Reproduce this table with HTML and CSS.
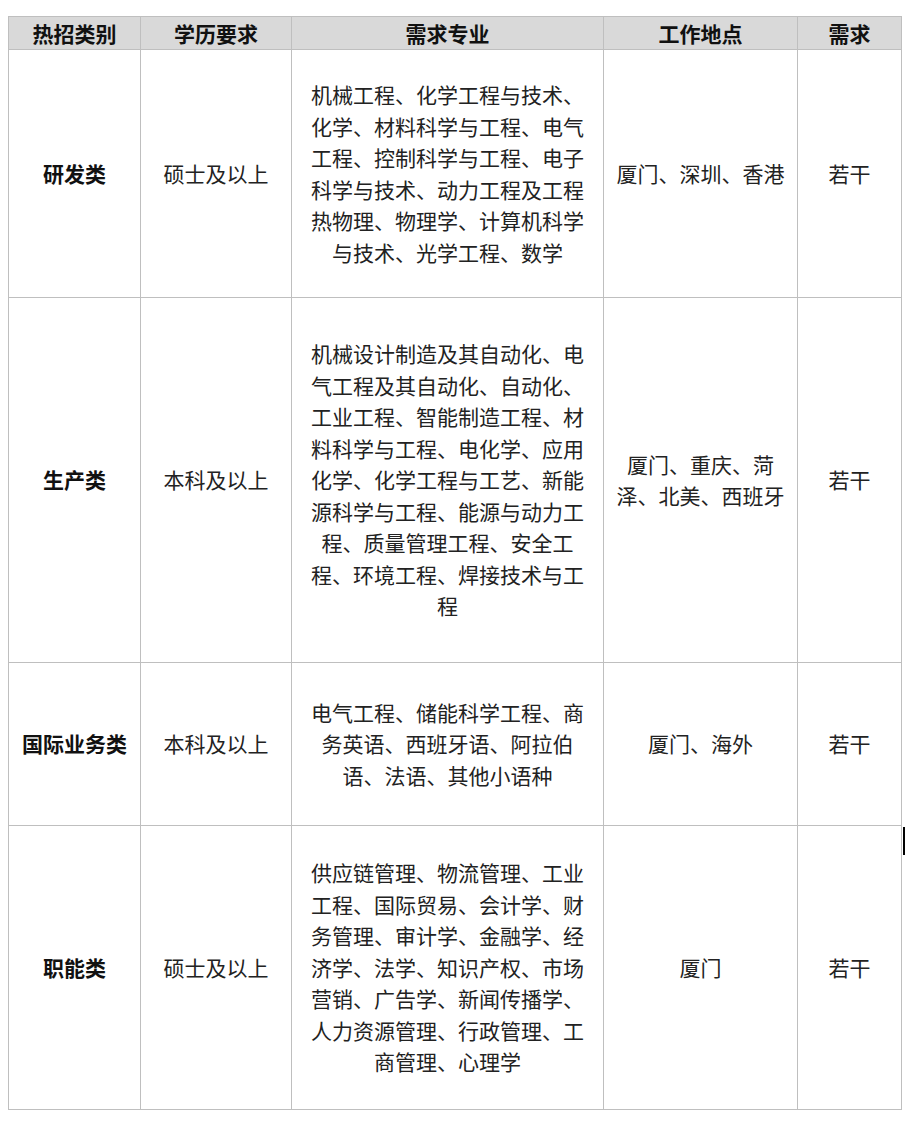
FILE: index.html
```html
<!DOCTYPE html>
<html lang="zh-CN">
<head>
<meta charset="utf-8">
<title>热招岗位</title>
<link rel="stylesheet" href="styles.css">
</head>
<body>
<div class="wrap">
<table class="jobs">
  <colgroup>
    <col class="c1"><col class="c2"><col class="c3"><col class="c4"><col class="c5">
  </colgroup>
  <thead>
    <tr class="head">
      <th>热招类别</th><th>学历要求</th><th>需求专业</th><th>工作地点</th><th>需求</th>
    </tr>
  </thead>
  <tbody>
    <tr class="r1">
      <td class="cat">研发类</td>
      <td>硕士及以上</td>
      <td>机械工程、化学工程与技术、化学、材料科学与工程、电气工程、控制科学与工程、电子科学与技术、动力工程及工程热物理、物理学、计算机科学与技术、光学工程、数学</td>
      <td>厦门、深圳、香港</td>
      <td>若干</td>
    </tr>
    <tr class="r2">
      <td class="cat">生产类</td>
      <td>本科及以上</td>
      <td>机械设计制造及其自动化、电气工程及其自动化、自动化、工业工程、智能制造工程、材料科学与工程、电化学、应用化学、化学工程与工艺、新能源科学与工程、能源与动力工程、质量管理工程、安全工程、环境工程、焊接技术与工程</td>
      <td>厦门、重庆、菏泽、北美、西班牙</td>
      <td>若干</td>
    </tr>
    <tr class="r3">
      <td class="cat">国际业务类</td>
      <td>本科及以上</td>
      <td>电气工程、储能科学工程、商务英语、西班牙语、阿拉伯语、法语、其他小语种</td>
      <td>厦门、海外</td>
      <td>若干</td>
    </tr>
    <tr class="r4">
      <td class="cat">职能类</td>
      <td>硕士及以上</td>
      <td>供应链管理、物流管理、工业工程、国际贸易、会计学、财务管理、审计学、金融学、经济学、法学、知识产权、市场营销、广告学、新闻传播学、人力资源管理、行政管理、工商管理、心理学</td>
      <td>厦门</td>
      <td>若干</td>
    </tr>
  </tbody>
</table>
<span class="caret"></span>
</div>
</body>
</html>
```
FILE: styles.css
```css
html, body {
  margin: 0;
  padding: 0;
  background: #ffffff;
}
body {
  font-family: "Noto Sans CJK SC", "Noto Sans", sans-serif;
  color: #222222;
}
.wrap {
  position: relative;
  padding: 16px 0 0 8px;
}
.jobs {
  border-collapse: collapse;
  table-layout: fixed;
  width: 894px;
  font-size: 21px;
  line-height: 31.5px;
}
.c1 { width: 132px; }
.c2 { width: 151px; }
.c3 { width: 312px; }
.c4 { width: 194px; }
.c5 { width: 104px; }
.jobs th,
.jobs td {
  border: 1px solid #bfbfbf;
  padding: 0 10px;
  text-align: center;
  vertical-align: middle;
  word-break: break-all;
  line-break: strict;
}
.jobs th {
  background: #d9d9d9;
  font-weight: 700;
  color: #111111;
  line-height: 32px;
}
.jobs td.cat {
  font-weight: 700;
  color: #111111;
}
.r1 { height: 248px; }
.r2 { height: 365px; }
.r3 { height: 163px; }
.r4 { height: 284px; }
.caret {
  position: absolute;
  left: 903px;
  top: 827px;
  width: 2px;
  height: 28px;
  background: #000000;
}
```
